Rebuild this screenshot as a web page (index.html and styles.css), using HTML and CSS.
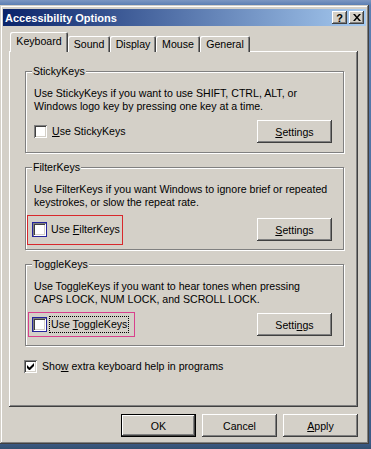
FILE: index.html
```html
<!DOCTYPE html>
<html lang="en">
<head>
    <meta charset="UTF-8">
    <title>Accessibility Options</title>
    <link rel="stylesheet" href="styles.css">
</head>
<body>
    <div class="window">
        <div class="titlebar">
            <span class="title">Accessibility Options</span>
            <div class="tb-buttons">
                <span class="tb-btn">?</span>
                <span class="tb-btn">
                    <svg width="8" height="7" viewBox="0 0 8 7"><path d="M0 0h2l2 2.5L6 0h2L5 3.5 8 7H6L4 4.5 2 7H0l3-3.5z" fill="#000"/></svg>
                </span>
            </div>
        </div>
        <div class="dialog">
            <div class="tabs">
                <div class="tab active">Keyboard</div>
                <div class="tab tab-sound">Sound</div>
                <div class="tab tab-display">Display</div>
                <div class="tab tab-mouse">Mouse</div>
                <div class="tab tab-general">General</div>
            </div>
            <div class="panel">
                <div class="group">
                    <span class="legend">StickyKeys</span>
                    <p class="desc">Use StickyKeys if you want to use SHIFT, CTRL, ALT, or<br>Windows logo key by pressing one key at a time.</p>
                    <div class="row">
                        <label class="check"><span class="box"></span><span><u>U</u>se StickyKeys</span></label>
                        <button class="btn"><u>S</u>ettings</button>
                    </div>
                </div>
                <div class="group group-filter">
                    <span class="legend">FilterKeys</span>
                    <p class="desc">Use FilterKeys if you want Windows to ignore brief or repeated<br>keystrokes, or slow the repeat rate.</p>
                    <div class="row">
                        <label class="check mark-red"><span class="box box-hot"></span><span>Use <u>F</u>ilterKeys</span></label>
                        <button class="btn"><u>S</u>ettings</button>
                    </div>
                </div>
                <div class="group">
                    <span class="legend">ToggleKeys</span>
                    <p class="desc">Use ToggleKeys if you want to hear tones when pressing<br>CAPS LOCK, NUM LOCK, and SCROLL LOCK.</p>
                    <div class="row">
                        <label class="check mark-pink"><span class="box box-hot"></span><span class="focus">Use <u>T</u>oggleKeys</span></label>
                        <button class="btn">Setti<u>n</u>gs</button>
                    </div>
                </div>
                <label class="check extra">
                    <span class="box">
                        <svg width="7" height="7" viewBox="0 0 7 7"><path d="M0 2v3l2 2h1l4-4V0L2.5 4.5z" fill="#000"/></svg>
                    </span>
                    <span>Sho<u>w</u> extra keyboard help in programs</span>
                </label>
            </div>
            <div class="actions">
                <button class="btn btn-default">OK</button>
                <button class="btn">Cancel</button>
                <button class="btn"><u>A</u>pply</button>
            </div>
        </div>
    </div>
</body>
</html>
```

FILE: styles.css
```css
body {
    margin: 0;
    height: 449px;
    overflow: hidden;
    background: linear-gradient(to bottom, #7d97c2 0, #5c7fb3 5px, #3c5a86 443px, #34506f 449px);
    font-family: "Liberation Sans", Arial, sans-serif;
    font-size: 10.6px;
    color: #000;
}
.window {
    margin-top: 5px;
    width: 369px;
    height: 439px;
    box-sizing: border-box;
    padding: 4px 3px 3px 3px;
    background: #d4d0c8;
    box-shadow: inset -1px -1px #404040, inset 1px 1px #d4d0c8, inset -2px -2px #808080, inset 2px 2px #fff;
}
.titlebar {
    height: 17px;
    display: flex;
    align-items: center;
    justify-content: space-between;
    padding: 0 2px 0 2px;
    background: linear-gradient(to right, #0a246a, #a6caf0);
}
.title {
    color: #fff;
    font-weight: bold;
    font-size: 11px;
}
.tb-buttons {
    display: flex;
    gap: 2px;
}
.tb-btn {
    width: 15px;
    height: 13px;
    display: flex;
    align-items: center;
    justify-content: center;
    background: #d4d0c8;
    font-weight: bold;
    font-size: 11px;
    box-shadow: inset -1px -1px #404040, inset 1px 1px #fff, inset -2px -2px #808080;
}
.dialog {
    padding: 7px 0 0 6px;
}
.tabs {
    display: flex;
    align-items: flex-end;
    height: 19px;
    position: relative;
    z-index: 1;
    margin-bottom: -1px;
}
.tab {
    height: 16px;
    box-sizing: border-box;
    padding-top: 2px;
    text-align: center;
    background: #d4d0c8;
    box-shadow: inset 1px 1px #fff, inset -1px 0 #404040, inset -2px 0 #808080;
    border-radius: 2px 2px 0 0;
}
.tab.active {
    height: 20px;
    width: 58px;
    margin-left: 1px;
    padding-top: 3px;
}
.tab-sound { width: 42px; }
.tab-display { width: 46px; }
.tab-mouse { width: 44px; }
.tab-general { width: 50px; }
.panel {
    width: 349px;
    height: 356px;
    box-sizing: border-box;
    padding: 20px 14px 0 16px;
    box-shadow: inset -1px -1px #404040, inset 1px 1px #fff, inset -2px -2px #808080;
}
.group {
    position: relative;
    border: 1px solid #808080;
    box-shadow: inset 1px 1px #fff, 1px 1px #fff;
    padding: 15px 11px 9px 8px;
    margin-bottom: 14px;
}
.group-filter .row {
    margin-top: 9px;
}
.group-filter {
    padding-bottom: 8px;
}
.legend {
    position: absolute;
    top: -7px;
    left: 6px;
    padding: 0 1px;
    background: #d4d0c8;
    line-height: 13px;
}
.desc {
    margin: 0;
    line-height: 13px;
    white-space: nowrap;
}
.row {
    margin-top: 7px;
    display: flex;
    align-items: center;
    justify-content: space-between;
}
.check {
    display: inline-flex;
    align-items: center;
    gap: 5px;
    position: relative;
    line-height: 13px;
}
.box {
    width: 13px;
    height: 13px;
    display: flex;
    align-items: center;
    justify-content: center;
    background: #fff;
    box-shadow: inset 1px 1px #808080, inset -1px -1px #fff, inset 2px 2px #404040, inset -2px -2px #d4d0c8;
}
.box-hot {
    outline: 1px solid #24249c;
    outline-offset: 0;
    margin-left: -1px;
}
.focus {
    outline: 1px dotted #000;
    outline-offset: 1px;
}
.mark-red::after {
    content: "";
    position: absolute;
    top: -8px;
    bottom: -9px;
    left: -7px;
    right: -3px;
    border: 1px solid #d8282c;
}
.mark-pink::after {
    content: "";
    position: absolute;
    top: -6px;
    bottom: -6px;
    left: -6px;
    right: -8px;
    border: 1px solid #d8408c;
}
.extra {
    margin-left: -1px;
    margin-top: 0;
}
.btn {
    width: 75px;
    height: 23px;
    border: none;
    padding: 0;
    background: #d4d0c8;
    font-family: inherit;
    font-size: inherit;
    color: #000;
    box-shadow: inset -1px -1px #404040, inset 1px 1px #fff, inset -2px -2px #808080;
}
.btn-default {
    box-shadow: inset 0 0 0 1px #000, inset -2px -2px #404040, inset 2px 2px #fff, inset -3px -3px #808080;
}
.actions {
    width: 349px;
    display: flex;
    justify-content: flex-end;
    gap: 6px;
    margin-top: 7px;
}
```
